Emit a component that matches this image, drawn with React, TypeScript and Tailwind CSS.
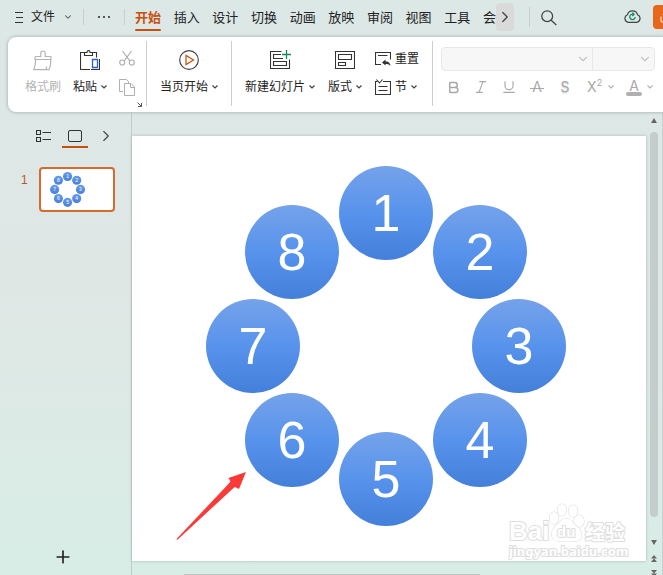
import type { ReactNode } from "react";
import { Bold, ChevronDown, ChevronRight, Italic, Plus, Share, Underline } from "lucide-react";

const tabs = ["开始", "插入", "设计", "切换", "动画", "放映", "审阅", "视图", "工具", "会"];

// ring of shapes, top-left corners inside a 360x360 box
const shapes = [
  { n: 1, x: 133, y: 0 },
  { n: 2, x: 227, y: 39 },
  { n: 3, x: 266, y: 133 },
  { n: 4, x: 227, y: 227 },
  { n: 5, x: 133, y: 266 },
  { n: 6, x: 39, y: 227 },
  { n: 7, x: 0, y: 133 },
  { n: 8, x: 39, y: 39 },
];

const Caret = () => (
  <svg width="6" height="4" viewBox="0 0 6 4" fill="none" stroke="currentColor" strokeWidth="1.2" className="shrink-0 opacity-85">
    <path d="M0.5 0.5 3 3 5.5 0.5" />
  </svg>
);

const Divider = ({ className = "" }: { className?: string }) => (
  <div className={`w-px shrink-0 bg-[#c8cfcd] ${className}`}></div>
);

const BigButton = ({ icon, label, caret, disabled }: { icon: ReactNode; label: string; caret?: boolean; disabled?: boolean }) => (
  <button disabled={disabled} className="flex shrink-0 flex-col items-center gap-[7px] text-[#222] disabled:text-[#b4b4b4]">
    <span className="flex h-[22px] items-center">{icon}</span>
    <span className="flex items-center gap-1 leading-[18px] whitespace-nowrap">
      {label}
      {caret && <Caret />}
    </span>
  </button>
);

const TopBar = () => (
  <header className="flex h-[37px] shrink-0 items-start overflow-hidden text-[#222]">
    <button className="ml-[15px] flex h-[34px] items-center gap-2 whitespace-nowrap">
      <svg width="8" height="11" viewBox="0 0 8 11" stroke="#333" strokeWidth="1">
        <path d="M0 .5h8M1 5.5h7M0 10.5h8" />
      </svg>
      文件
      <ChevronDown size={10} strokeWidth={2.5} className="text-[#555]" />
    </button>
    <Divider className="mt-[9px] ml-[10px] h-4" />
    <button aria-label="更多" className="flex h-[34px] w-10 items-center justify-center gap-[3px]">
      <i className="size-[2px] bg-[#555]"></i>
      <i className="size-[2px] bg-[#555]"></i>
      <i className="size-[2px] bg-[#555]"></i>
    </button>
    <Divider className="mt-[9px] h-4" />
    <nav className="ml-[10px] flex w-[361px] shrink-0 justify-between text-[13px]">
      {tabs.map((tab, i) => (
        <button key={tab} className={`flex shrink-0 flex-col items-center pt-2 leading-5 ${i === 0 ? "font-bold text-[#c8500f]" : ""}`}>
          {tab}
          {i === 0 && <span className="mt-px h-[2px] w-full rounded bg-[#c8500f]"></span>}
        </button>
      ))}
    </nav>
    <button aria-label="更多选项卡" className="mt-[3px] flex h-7 w-[18px] shrink-0 items-center justify-center rounded bg-[#dadada]">
      <ChevronRight size={18} strokeWidth={1.7} className="shrink-0 text-[#444]" />
    </button>
    <Divider className="mt-[7px] ml-[15px] h-5" />
    <button aria-label="搜索" className="mt-[10px] ml-[11px] shrink-0">
      <svg width="16" height="16" viewBox="0 0 16 16" fill="none" stroke="#444" strokeWidth="1.3">
        <circle cx="6.2" cy="6.2" r="5.4" />
        <path d="M10.2 10.2 15.3 15" />
      </svg>
    </button>
    <div className="flex-1"></div>
    <button aria-label="已同步" className="mt-[9px] mr-3 shrink-0">
      <svg width="17" height="15" viewBox="0 0 17 15" fill="none" stroke="#444" strokeWidth="1.2">
        <path d="M4.4 13.3A3.9 3.9 0 0 1 3.4 5.8 5.3 5.3 0 0 1 13.6 5.8 3.9 3.900 0 0 1 12.600 13.300Z" />
        <path d="M9.500 5.400A2.700 2.700 0 1 0 11.200 8M8.300 3.600 10 5.300 8.300 7" stroke="#168760" strokeWidth="1.3" />
      </svg>
    </button>
    <button aria-label="分享" className="mt-[5px] flex h-6 w-[10px] shrink-0 items-center overflow-hidden rounded-l bg-[#e7671d] pl-[6px] text-white">
      <Share size={12} className="shrink-0" />
    </button>
  </header>
);

const ClipboardGroup = () => (
  <div className="relative flex shrink-0 gap-3 pr-[11px] pl-[17px]">
    <BigButton
      disabled
      label="格式刷"
      icon={
        <svg width="20" height="21" viewBox="0 0 20 21" fill="none" stroke="currentColor" strokeWidth="1.2">
          <path d="M2 9.5V7.2q0-.7.7-.7H7.8V3.2a2.2 2.2 0 0 1 4.4 0v3.3h5.1q.7 0 .7.7v2.3zM2.6 9.5C2.6 14 1.8 17.5.8 19.7H16c1-2 2-6 1.6-10.2M12.8 19.5c.6-1 .8-2 .9-3" />
        </svg>
      }
    />
    <BigButton
      caret
      label="粘贴"
      icon={
        <svg width="20" height="21" viewBox="0 0 20 21" fill="none" stroke="#333" strokeWidth="1.1">
          <path d="M4.500 2.500H.5V19.500H10M12.500 2.500h4V7.500M4.500 5.500v-3H7Q7 .600 8.500.600T10 2.500h2.500v3zM19.500 9v10.500H11" />
          <path d="M12.500 9.500h5v8h-5z" fill="#fff" stroke="#2b5fd9" strokeWidth="1.3" />
        </svg>
      }
    />
    <div className="flex flex-col gap-3 pt-px text-[#b0b0b0]">
      <button disabled aria-label="剪切">
        <svg width="16" height="17" viewBox="0 0 16 17" fill="none" stroke="currentColor" strokeWidth="1.2">
          <path d="M3.5 1 11 11.2M12.5 1 5 11.2" />
          <circle cx="3.2" cy="12.5" r="2.5" />
          <circle cx="12.8" cy="12.5" r="2.5" />
        </svg>
      </button>
      <button disabled aria-label="复制">
        <svg width="16" height="17" viewBox="0 0 16 17" fill="none" stroke="currentColor" strokeWidth="1">
          <path d="M4 12.500H.5V.500H7.500l2 2V4.500M5.500 4.500h6.500L15.500 8v8.500H5.500zM11.500 4.500v4h4" />
        </svg>
      </button>
    </div>
    <button aria-label="剪贴板设置" className="absolute right-1 -bottom-[11px]">
      <svg width="5" height="5" viewBox="0 0 5 5" fill="none" stroke="#555" strokeWidth="1">
        <path d="M.5.5 4 4M4.500 1v3.500H1" />
      </svg>
    </button>
  </div>
);

const SlideGroup = () => (
  <div className="flex shrink-0 gap-[13px] px-[13px]">
    <BigButton
      caret
      label="新建幻灯片"
      icon={
        <svg width="21" height="20" viewBox="0 0 21 20" fill="none" stroke="#333" strokeWidth="1.1">
          <path d="M11.500 1.500H.5V18.500H19.500V9.500M11 4.500H3.500v4h9.500M3.500 11.500h13v4h-13z" />
          <path d="M16.500 0v9M12 4.500h9" stroke="#168760" strokeWidth="1.3" />
        </svg>
      }
    />
    <BigButton
      caret
      label="版式"
      icon={
        <svg width="20" height="18" viewBox="0 0 20 18" fill="none" stroke="#333" strokeWidth="1.1">
          <path d="M.5.500h19v17H.5zM3.500 3.500h13v5h-13zM3.500 11.500h7v3h-7z" />
        </svg>
      }
    />
    <div className="flex shrink-0 flex-col gap-[10px] pt-px">
      <button className="flex h-[18px] items-center gap-1 whitespace-nowrap">
        <svg width="16" height="16" viewBox="0 0 16 16" fill="none" stroke="#333" strokeWidth="1.1">
          <path d="M6 13.500H.5V1.500H15.500V8.500M3 4.500h9.500" />
          <path d="M7 11.500 10.500 8.500v2h1.500q3 .800 3.500 4.500-1.500-2-3.500-2H10.500v1.500z" fill="#333" stroke="none" />
        </svg>
        重置
      </button>
      <button className="flex h-[18px] items-center gap-1 whitespace-nowrap">
        <svg width="16" height="16" viewBox="0 0 16 16" fill="none" stroke="#333" strokeWidth="1.1">
          <path d="M2.500 2.500H.5V15.500H15.500V2.500H8M1.500.500 4.500 4 7.500.500M3.500 7.500h9M3.500 11.500h9" />
        </svg>
        节
        <Caret />
      </button>
    </div>
  </div>
);

const FontGroup = () => (
  <div className="flex min-w-[222px] flex-1 flex-col gap-[7px] px-2 text-[#a8a8a8]">
    <div className="-mt-[2px] flex h-6 rounded border border-[#e8e8e8] bg-[#f7f7f7]">
      <div className="relative flex-1 border-r border-[#e8e8e8]">
        <select disabled aria-label="字体" className="h-full w-full appearance-none"></select>
        <ChevronDown size={14} className="pointer-events-none absolute top-1 right-[2px] text-[#c4c4c4]" />
      </div>
      <div className="relative w-[61px]">
        <select disabled aria-label="字号" className="h-full w-full appearance-none"></select>
        <ChevronDown size={14} className="pointer-events-none absolute top-1 right-[2px] text-[#c4c4c4]" />
      </div>
    </div>
    <div className="-ml-[2px] flex h-[18px] items-center font-['Inter',sans-serif] text-[14px] leading-[18px]">
      <button disabled aria-label="加粗" className="flex w-7 justify-center"><Bold size={15} strokeWidth={2.3} /></button>
      <button disabled aria-label="倾斜" className="flex w-7 justify-center"><Italic size={16} strokeWidth={1.7} /></button>
      <button disabled aria-label="下划线" className="flex w-7 justify-center"><Underline size={16} strokeWidth={1.7} /></button>
      <button disabled aria-label="删除线" className="relative flex w-7 justify-center">
        <span>A</span>
        <span className="absolute top-[10px] h-px w-[14px] bg-[#a8a8a8]"></span>
      </button>
      <button disabled aria-label="阴影" className="w-7 text-shadow-sm">S</button>
      <button disabled aria-label="上标" className="ml-2 flex items-center gap-[6px]">
        <span className="flex">X<sup className="top-0 text-[9px] leading-[10px]">2</sup></span>
        <Caret />
      </button>
      <button disabled aria-label="字体颜色" className="ml-3 flex items-center gap-[5px]">
        <span className="flex w-4 flex-col items-center leading-[13px]">
          A
          <span className="h-1 w-full rounded bg-[#b0b0b0]"></span>
        </span>
        <Caret />
      </button>
    </div>
  </div>
);

const Ribbon = () => (
  <div className="relative z-10 ml-2 flex shrink-0 overflow-hidden rounded-l-lg bg-white pt-3 pb-4 text-[#222] shadow-[0_0_3px_1px_#b3bfbc]">
    <ClipboardGroup />
    <Divider className="-mt-2 -mb-[10px]" />
    <div className="flex shrink-0 px-[13px]">
      <BigButton
        caret
        label="当页开始"
        icon={
          <svg width="20" height="20" viewBox="0 0 20 20" fill="none">
            <circle cx="10" cy="10" r="9.3" stroke="#444" strokeWidth="1.2" />
            <path d="M7 5.500v9L14.500 10z" stroke="#d2530f" strokeWidth="1.3" />
          </svg>
        }
      />
    </div>
    <Divider className="-mt-2 -mb-[10px]" />
    <SlideGroup />
    <Divider className="-mt-2 -mb-[10px]" />
    <FontGroup />
  </div>
);

const Thumbnail = () => (
  <svg viewBox="0 0 740 422" className="block h-auto w-full">
    <defs>
      <linearGradient id="ball" x2="0" y2="1">
        <stop stopColor="#6b9be9" />
        <stop offset="1" stopColor="#4480da" />
      </linearGradient>
    </defs>
    {shapes.map(({ n, x, y }) => (
      <g key={n}>
        <circle cx={x + 140} cy={y + 77} r="47" fill="url(#ball)" />
        <text x={x + 140} y={y + 96} fontSize="52" fill="#fff" textAnchor="middle" fontFamily="Liberation Sans, sans-serif">{n}</text>
      </g>
    ))}
  </svg>
);

const Sidebar = () => (
  <aside className="flex w-[132px] shrink-0 flex-col border-r border-[#c3cccb]">
    <div className="flex items-start pt-[18px] pl-9 text-[#444]">
      <button aria-label="大纲">
        <svg width="15" height="12" viewBox="0 0 15 12" fill="none" stroke="#333" strokeWidth="1.1">
          <path d="M.5.500h4v4h-4zM.5 7.500h4v4h-4zM6.500 2.500H15M6.500 9.500H15" />
        </svg>
      </button>
      <button aria-label="幻灯片" className="ml-[11px] flex w-[26px] flex-col items-center gap-1">
        <span className="h-3 w-[14px] rounded-[2px] border border-[#333]"></span>
        <span className="h-[2px] w-full bg-[#c8500f]"></span>
      </button>
      <button aria-label="收起" className="ml-[9px]">
        <ChevronRight size={18} strokeWidth={1.5} className="-mt-[3px]" />
      </button>
    </div>
    <div className="mt-[19px] flex gap-3 pl-[21px] leading-[26px] text-[#b9581f]">
      <span className="w-[6px]">1</span>
      <button aria-label="幻灯片 1" className="h-[45px] w-[76px] overflow-hidden rounded-[4px] border-2 border-[#d46a2e] bg-white">
        <Thumbnail />
      </button>
    </div>
    <button aria-label="新建" className="mt-auto mb-2 ml-[53px] self-start text-[#222]">
      <Plus size={20} strokeWidth={2} />
    </button>
  </aside>
);

const Arrow = () => (
  <svg viewBox="0 0 70 70" className="absolute top-[336px] left-11 size-[70px]" fill="#fb3a38">
    <path d="M.5 67 51 13.500 54.500 9.500 52.500 6 70 0 63 17 62 16.500 59 15 57.500 16 1.500 67.800Z" />
  </svg>
);

const Watermark = () => (
  <svg
    width="122"
    height="58"
    viewBox="0 0 122 58"
    className="absolute right-4 bottom-0 [paint-order:stroke]"
    fill="#fff"
    stroke="#dedede"
    strokeWidth="2"
    strokeLinejoin="round"
    fontWeight="bold"
  >
    <text x="1" y="37" fontSize="26" fontFamily="Liberation Sans, sans-serif">Bai</text>
    <text x="77" y="37" fontSize="20" fontFamily="Noto Sans CJK SC, sans-serif">经验</text>
    <g strokeWidth="1.2">
      <ellipse cx="46" cy="15" rx="4.5" ry="6" />
      <ellipse cx="54" cy="7" rx="4.5" ry="6" />
      <ellipse cx="65" cy="8" rx="4.5" ry="6" />
      <ellipse cx="71" cy="18" rx="5" ry="6" />
      <path d="M58 15.500c-5 0-6 4-10 7-4 4-5 7-4 11 1 5 5 5 9 4.500h12c4 .5 8 0 8.500-5 .5-4-1-7-5-10-4-3-5-7.500-10.500-7.500z" />
    </g>
    <text x="49" y="34" fontSize="15" fontFamily="Liberation Sans, sans-serif">du</text>
    <text x="1" y="53" fontSize="13" fontFamily="Noto Sans, sans-serif">jingyan.baidu.com</text>
  </svg>
);

const Canvas = () => (
  <main className="flex min-w-0 flex-1 flex-col pt-6">
    <div className="relative flex-1 overflow-hidden bg-white shadow-[0_0_3px_#a9b6b3]">
      <div className="absolute top-[30px] left-[74px] size-[360px]">
        {shapes.map(({ n, x, y }) => (
          <div
            key={n}
            style={{ left: x, top: y }}
            className="absolute flex size-[94px] items-center justify-center rounded-full bg-linear-to-b from-[#75a2ea] via-[#5793ec] to-[#4480da] font-['Liberation_Sans',sans-serif] text-[52px] leading-none text-white"
          >
            {n}
          </div>
        ))}
      </div>
      <Arrow />
      <Watermark />
    </div>
    <div className="flex h-[14px] items-end pl-[52px]">
      <div className="h-px w-[64%] bg-[#bcc6c4]"></div>
    </div>
  </main>
);

const Scrollbar = () => (
  <div className="flex w-[17px] shrink-0 flex-col items-center border-r border-[#c8d2d0] pt-[6px]">
    <svg width="6" height="5" viewBox="0 0 6 5" fill="#666"><path d="M3 0 6 5H0z" /></svg>
    <div className="mt-[9px] mb-[23px] w-2 flex-1 rounded-full bg-[#c4cdcb]"></div>
    <svg width="6" height="5" viewBox="0 0 6 5" fill="#666"><path d="M3 5 6 0H0z" /></svg>
    <svg width="6" height="7" viewBox="0 0 6 7" fill="#666" className="mt-[10px]"><path d="M3 0 6 3.500H0zM3 3.500 6 7H0z" /></svg>
    <svg width="6" height="7" viewBox="0 0 6 7" fill="#666" className="mt-2 -mb-[2px]"><path d="M3 3.500 6 0H0zM3 7 6 3.500H0z" /></svg>
  </div>
);

const App = () => {
  return (
    <div className="flex h-screen flex-col overflow-hidden bg-linear-to-b from-[#dce8e6] via-[#dfe7e5] to-[#d8ede6] font-['Liberation_Sans','Noto_Sans_CJK_SC',sans-serif] text-xs">
      <TopBar />
      <Ribbon />
      <div className="flex min-h-0 flex-1">
        <Sidebar />
        <Canvas />
        <Scrollbar />
      </div>
    </div>
  );
};

export default App;
